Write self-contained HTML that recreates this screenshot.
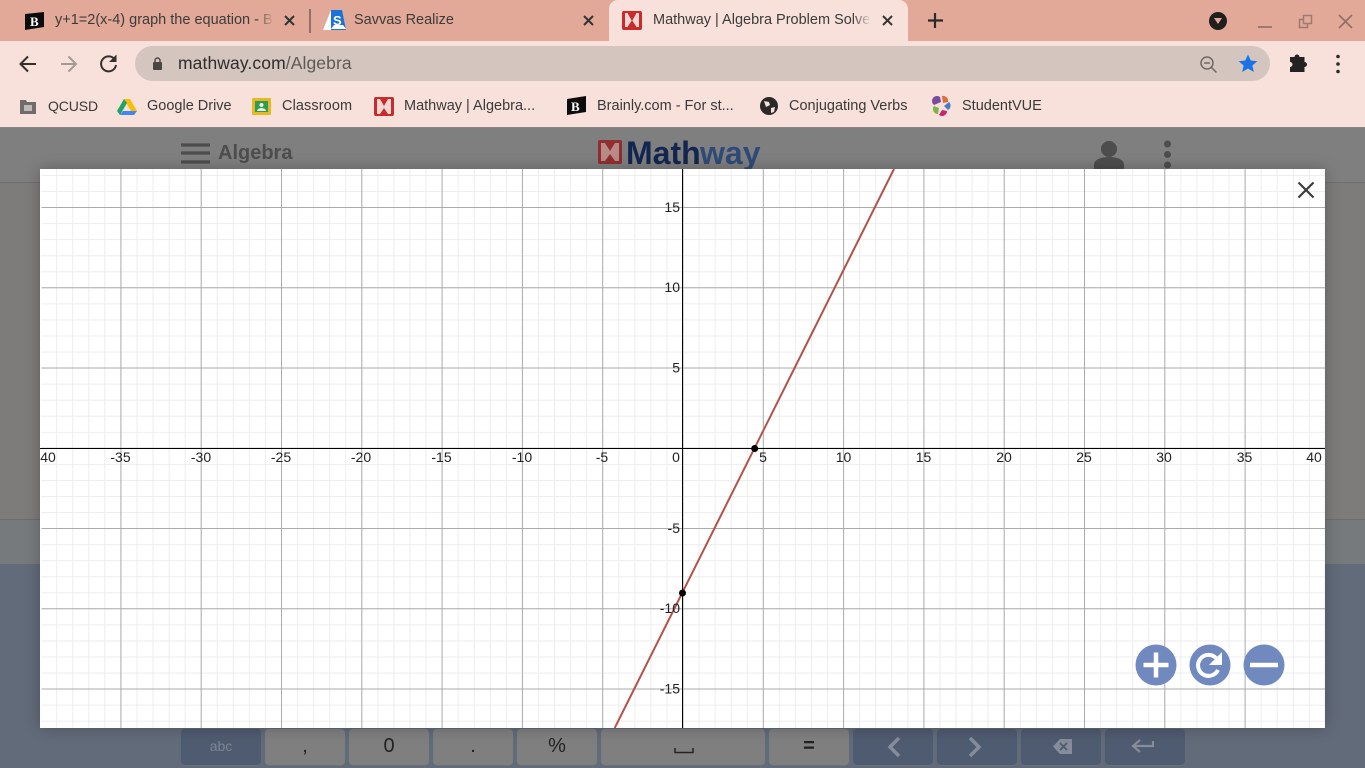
<!DOCTYPE html>
<html><head><meta charset="utf-8"><title>Mathway</title>
<style>
html,body{margin:0;padding:0;width:1365px;height:768px;overflow:hidden;background:#7e7c7a;font-family:"Liberation Sans",sans-serif}
.a{position:absolute;white-space:nowrap}
.t{font-size:14.5px;line-height:20px;color:#3c3b3a}
.b{font-size:14.5px;line-height:20px;color:#3a3a3a}
.key{position:absolute;top:729px;height:36px;background:#807f7f;border-radius:4px;text-align:center;color:#222;font-size:20px;line-height:34px;box-shadow:0 1px 0 #6c7078}
.key.d{background:#4f5b70;color:#8d93a0}
.n{font-size:14px;fill:#222;font-family:"Liberation Sans",sans-serif}
</style></head><body>
<!-- chrome -->
<div class="a" style="left:0;top:0;width:1365px;height:41px;background:#e2a998"></div>
<div class="a" style="left:0;top:41px;width:1365px;height:87px;background:#f7e1da"></div>
<div class="a" style="left:0;top:127px;width:1365px;height:1px;background:#8a8583"></div>
<div class="a" style="left:609px;top:0;width:299px;height:41px;background:#f7e1da;border-radius:9px 9px 0 0"></div>
<div class="a" style="left:309px;top:9px;width:2px;height:24px;background:#8f7167"></div>

<svg class="a" style="left:0;top:0" width="1365" height="128" viewBox="0 0 1365 128">
<!-- brainly tab -->
<path d="M25 14l19-2v15l-19 3z" fill="#0c0c0c"/><text x="30" y="26" font-family="Liberation Serif" font-weight="bold" font-size="13" fill="#fff">B</text>
<path d="M285 16l9 9M294 16l-9 9M584 16l9 9M593 16l-9 9M883 16l9 9M892 16l-9 9" stroke="#333" stroke-width="2" fill="none"/>
<!-- savvas -->
<path d="M331 10h11l4 20h-17z" fill="#1a73d9"/><path d="M331 29l3-4h9l3 4z" fill="#fff"/><path d="M323 30l8-20v20z" fill="#fff"/><text x="333" y="25" font-size="13" font-weight="bold" fill="#fff" font-family="Liberation Sans">S</text>
<!-- mathway tab -->
<rect x="622" y="11" width="20" height="19" rx="2" fill="#c92a2a"/><path d="M625 13h3l4 7 4-7h3v14h-3l-4-6-4 6h-3z" fill="#f4d6d3"/><path d="M628 13l4 7 4-7M628 27l4-6 4 6" stroke="#c92a2a" fill="none"/>
<path d="M935 13v15M928 20.500h15" stroke="#2a2a2a" stroke-width="2.200" fill="none"/>
<!-- window controls -->
<circle cx="1218" cy="21" r="9" fill="#201f1e"/><path d="M1214 18h8l-4 6z" fill="#e2a998"/>
<path d="M1258 27h14" stroke="#9c7a6f" stroke-width="2"/>
<rect x="1303.500" y="15.500" width="8" height="8" fill="none" stroke="#9c7a6f" stroke-width="1.500"/><path d="M1303 19.500h-3.500v8h8v-3.500" fill="none" stroke="#9c7a6f" stroke-width="1.500"/>
<path d="M1339 15l13 13M1352 15l-13 13" stroke="#8f6f65" stroke-width="1.600"/>
<!-- nav -->
<path d="M36 64H21M28 56.500L20.500 64l7.500 7.500" stroke="#33302e" stroke-width="2" fill="none"/>
<path d="M76 64H61M68.500 56.500L76 64l-7.500 7.500" stroke="#a39a96" stroke-width="2" fill="none"/>
<path d="M115 60a7.500 7.500 0 1 0 1 5" stroke="#33302e" stroke-width="2" fill="none"/><path d="M116.500 54.500v7.500H109z" fill="#33302e"/>
<rect x="135" y="46" width="1135" height="35" rx="17.500" fill="#d5c5bf"/>
<rect x="153" y="62" width="9" height="8" rx="1" fill="#4a4644"/><path d="M155 62.500v-2a2.500 2.500 0 0 1 5 0v2" stroke="#4a4644" stroke-width="1.400" fill="none"/>
<circle cx="1207" cy="63" r="6" fill="none" stroke="#6e6865" stroke-width="1.500"/><path d="M1204 63h6M1211.500 67.500l5 5" stroke="#6e6865" stroke-width="1.500"/>
<path d="M1248 54.500l2.800 6 6.500.7-4.900 4.300 1.400 6.400-5.800-3.300-5.800 3.300 1.400-6.400-4.900-4.300 6.500-.7z" fill="#1a73e8"/>
<path d="M1290 58h4.500a2.500 2.500 0 0 1 5 0h5v5a2.500 2.500 0 0 1 0 5v5h-14.500v-5a2.500 2.500 0 0 0 0-5z" fill="#222" transform="translate(0,-1)"/>
<circle cx="1338" cy="56.500" r="1.800" fill="#2a2a2a"/><circle cx="1338" cy="64" r="1.800" fill="#2a2a2a"/><circle cx="1338" cy="71.500" r="1.800" fill="#2a2a2a"/>
<!-- bookmarks -->
<path d="M20 100h6l1 2h9v12H20z" fill="#6f6c6b"/><rect x="24" y="105" width="8" height="6" fill="#bdb9b7"/>
<path d="M124 99h6l7 12h-6z" fill="#fbbc04"/><path d="M124 99l-7 12 3 4 7-12z" fill="#1fa463"/><path d="M120 115h14l3-4h-14z" fill="#4285f4"/>
<rect x="252" y="98" width="19" height="17" rx="1" fill="#e6b923"/><rect x="255" y="101" width="13" height="11" fill="#2a9d58"/><circle cx="261.500" cy="105" r="2" fill="#f4f0d8"/><path d="M257 111a4.500 3 0 0 1 9 0z" fill="#f4f0d8"/>
<rect x="374" y="97" width="20" height="19" rx="2" fill="#c92a2a"/><path d="M377 99h3l4 7 4-7h3v15h-3l-4-6-4 6h-3z" fill="#f4d6d3"/>
<path d="M567 99l19-3v16l-19 3z" fill="#0c0c0c"/><text x="571" y="111" font-family="Liberation Serif" font-weight="bold" font-size="13" fill="#fff">B</text>
<circle cx="769" cy="106" r="9" fill="#2a2a2a"/><path d="M764 101l5 1 1 3-4 2zM771 108l4-1-1 5-3 1z" fill="#f7e1da"/>
<path d="M942 96a5 5 0 0 1 6 6l-5 1z" fill="#e06b3c"/><path d="M949 102a5 5 0 0 1-1 8l-4-4z" fill="#3f7fc4"/><path d="M947 111a5 5 0 0 1-8 4l3-5z" fill="#c8246f"/><path d="M938 114a5 5 0 0 1-4-8l5 2z" fill="#7bb24a"/><path d="M934 105a5 5 0 0 1 6-8l1 5z" fill="#7a4a9c"/>
</svg>

<div class="a t" style="left:55px;top:10px;width:218px;overflow:hidden">y+1=2(x-4) graph the equation - Brainly</div>
<div class="a" style="left:256px;top:10px;width:18px;height:20px;background:linear-gradient(90deg,rgba(226,169,152,0),#e2a998)"></div>
<div class="a t" style="left:354px;top:10px">Savvas Realize</div>
<div class="a t" style="left:653px;top:10px;width:218px;overflow:hidden">Mathway | Algebra Problem Solver</div>
<div class="a" style="left:853px;top:10px;width:18px;height:20px;background:linear-gradient(90deg,rgba(247,225,218,0),#f7e1da)"></div>
<div class="a" style="left:178px;top:53px;font-size:17.500px;line-height:21px;letter-spacing:.1px;color:#2f2d2c">mathway.com<span style="color:#5f5a57">/Algebra</span></div>
<div class="a b" style="left:48px;top:96px;font-size:14px;letter-spacing:-.1px">QCUSD</div>
<div class="a b" style="left:147px;top:96px">Google Drive</div>
<div class="a b" style="left:282px;top:96px;letter-spacing:.1px">Classroom</div>
<div class="a b" style="left:404px;top:96px">Mathway | Algebra...</div>
<div class="a b" style="left:597px;top:96px">Brainly.com - For st...</div>
<div class="a b" style="left:789px;top:96px">Conjugating Verbs</div>
<div class="a b" style="left:962px;top:96px">StudentVUE</div>

<!-- dimmed page -->
<div class="a" style="left:0;top:128px;width:1365px;height:54px;background:#7f7f7f"></div>
<div class="a" style="left:0;top:182px;width:1365px;height:1px;background:#6f6f6f"></div>
<div class="a" style="left:0;top:183px;width:1365px;height:336px;background:#7e7c7a"></div>
<div class="a" style="left:0;top:519px;width:1365px;height:1px;background:#6c6c6c"></div>
<div class="a" style="left:0;top:520px;width:1365px;height:44px;background:#777a7d"></div>
<div class="a" style="left:0;top:564px;width:1365px;height:204px;background:#626b7a"></div>
<svg class="a" style="left:180px;top:140px" width="32" height="26"><path d="M1 5h29M1 13h29M1 22h29" stroke="#4d4d4d" stroke-width="3.200"/></svg>
<div class="a" style="left:218px;top:141px;font-size:20px;line-height:25px;font-weight:bold;color:#4d4d4d">Algebra</div>
<svg class="a" style="left:597px;top:136px" width="170" height="33">
<rect x="1" y="4" width="24" height="24" rx="2" fill="#8f2f2f"/><path d="M4 7h4l5 8 5-8h4v18h-4l-5-7-5 7H4z" fill="#b98a88"/>
<text x="29" y="28" font-family="Liberation Sans" font-weight="bold" font-size="32" fill="#13264f">Math</text>
<text x="103" y="28" font-family="Liberation Sans" font-weight="bold" font-size="32" fill="#2f4a78">way</text>
</svg>
<svg class="a" style="left:1092px;top:138px" width="34" height="31"><circle cx="17" cy="11" r="8" fill="#4d4d4d"/><path d="M2 31v-4c0-6 8-8 15-8s15 2 15 8v4z" fill="#4d4d4d"/></svg>
<svg class="a" style="left:1160px;top:138px" width="16" height="32"><circle cx="7.500" cy="6" r="3.500" fill="#4d4d4d"/><circle cx="7.500" cy="16.500" r="3.500" fill="#4d4d4d"/><circle cx="7.500" cy="27" r="3.500" fill="#4d4d4d"/></svg>

<!-- keyboard -->
<div class="key d" style="left:181px;width:80px;font-size:14px;color:#7d8595">abc</div>
<div class="key" style="left:265px;width:80px">,</div>
<div class="key" style="left:349px;width:80px">0</div>
<div class="key" style="left:433px;width:80px">.</div>
<div class="key" style="left:517px;width:80px">%</div>
<div class="key" style="left:601px;width:164px"></div>
<svg class="a" style="left:674px;top:745px" width="20" height="10"><path d="M1 3v4.500h18V3" fill="none" stroke="#222" stroke-width="1.500"/></svg>
<div class="key" style="left:769px;width:80px;font-weight:bold">=</div>
<div class="key d" style="left:853px;width:80px"></div>
<div class="key d" style="left:937px;width:80px"></div>
<div class="key d" style="left:1021px;width:80px"></div>
<div class="key d" style="left:1105px;width:80px"></div>
<svg class="a" style="left:880px;top:735px" width="280" height="24">
<path d="M19 3l-9 9 9 9" fill="none" stroke="#868c99" stroke-width="3.500"/>
<path d="M90 3l9 9-9 9" fill="none" stroke="#868c99" stroke-width="3.500"/>
<path d="M180 4h12v15h-12l-7-7.500z" fill="#868c99"/><path d="M180 8l7 7M187 8l-7 7" stroke="#4f5b70" stroke-width="1.800"/>
<path d="M283 6v5h-19M270 5l-7 6 7 6" transform="translate(-10,0)" fill="none" stroke="#868c99" stroke-width="2.200"/>
</svg>

<!-- modal -->
<div class="a" style="left:40px;top:169px;width:1285px;height:559px;background:#fff;box-shadow:0 0 14px rgba(0,0,0,.25)"></div>
<svg class="a" style="left:40px;top:169px" width="1285" height="559" viewBox="0 0 1285 559">
<defs>
<pattern id="mx" patternUnits="userSpaceOnUse" x="0.100" y="0" width="16.060" height="559"><rect x="0" width="1" height="559" fill="#ededed"/></pattern>
<pattern id="my" patternUnits="userSpaceOnUse" x="0" y="6" width="1285" height="16.050"><rect y="0" width="1285" height="1" fill="#ededed"/></pattern>
<pattern id="Mx" patternUnits="userSpaceOnUse" x="0.100" y="0" width="80.300" height="559"><rect x="0" width="1" height="559" fill="#ababab"/></pattern>
<pattern id="My" patternUnits="userSpaceOnUse" x="0" y="38" width="1285" height="80.250"><rect y="0" width="1285" height="1" fill="#ababab"/></pattern>
</defs>
<rect width="1285" height="559" fill="url(#mx)"/>
<rect width="1285" height="559" fill="url(#my)"/>
<rect width="1285" height="559" fill="url(#Mx)"/>
<rect width="1285" height="559" fill="url(#My)"/>
<rect x="0" y="0" width="1.500" height="559" fill="#fff"/>
<path d="M642.500 0v559" stroke="#000" stroke-width="1"/>
<path d="M0 279.500h1285" stroke="#000" stroke-width="1"/>
<path d="M854 0L574.700 559" stroke="#b5504a" stroke-width="2"/>
<circle cx="714.700" cy="279.500" r="3.500" fill="#000"/>
<circle cx="642.500" cy="424" r="3.500" fill="#000"/>
<g class="n" text-anchor="middle">
<text x="8" y="293">40</text><text x="80.500" y="293">-35</text><text x="161" y="293">-30</text><text x="241" y="293">-25</text><text x="321" y="293">-20</text><text x="401.500" y="293">-15</text><text x="482" y="293">-10</text><text x="562" y="293">-5</text><text x="636" y="293">0</text><text x="723" y="293">5</text><text x="803.500" y="293">10</text><text x="883.500" y="293">15</text><text x="964" y="293">20</text><text x="1044" y="293">25</text><text x="1124" y="293">30</text><text x="1204.500" y="293">35</text><text x="1274" y="293">40</text>
</g>
<g class="n" text-anchor="end">
<text x="640" y="43">15</text><text x="640" y="123">10</text><text x="640" y="203.500">5</text><text x="640" y="364">-5</text><text x="640" y="444">-10</text><text x="640" y="524.500">-15</text>
</g>
<path d="M1258.500 13.500l15 15M1273.500 13.500l-15 15" stroke="#3c3c3c" stroke-width="2.200"/>
<circle cx="1116" cy="496" r="20.500" fill="#7089bf"/><path d="M1116 483.500v25M1103.500 496h25" stroke="#fff" stroke-width="4.500"/>
<circle cx="1170" cy="496" r="20.500" fill="#7089bf"/><path d="M1178 501a10.500 10.500 0 1 1-2-12" fill="none" stroke="#fff" stroke-width="4"/><path d="M1182 483v13h-13z" fill="#fff"/>
<circle cx="1224" cy="496" r="20.500" fill="#7089bf"/><path d="M1210 496h28" stroke="#fff" stroke-width="4.500"/>
</svg>
</body></html>
